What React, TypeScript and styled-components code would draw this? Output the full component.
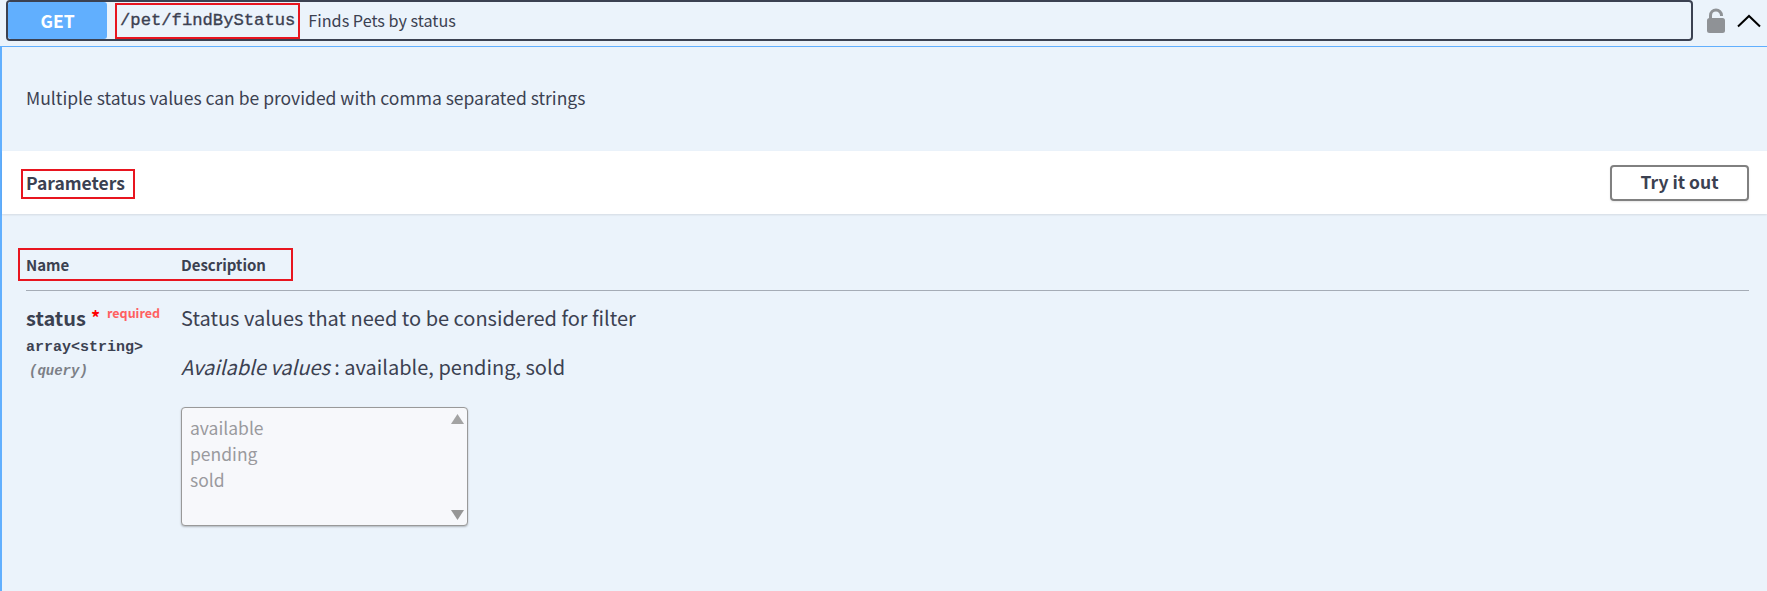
import React from 'react';
import styled, { createGlobalStyle } from 'styled-components';

const SANS = '"Noto Sans CJK SC", "Noto Sans", sans-serif';
const MONO = '"Liberation Mono", "DejaVu Sans Mono", monospace';

const GlobalStyle = createGlobalStyle`
    html, body {
        margin: 0;
        padding: 0;
        background: #ebf3fb;
    }
    * {
        box-sizing: border-box;
    }
`;

const Page = styled.div`
    width: 1767px;
    height: 591px;
    overflow: hidden;
    background: #ebf3fb;
    font-family: ${SANS};
    color: #3b4151;
`;

const SummaryRow = styled.div`
    display: flex;
    align-items: center;
    height: 46px;
    padding: 0 0 5px 6px;
`;

const SummaryBox = styled.div`
    display: flex;
    align-items: center;
    width: 1687px;
    height: 41px;
    margin-top: -1px;
    border: 2px solid #3b4151;
    border-radius: 4px;
`;

const Method = styled.div`
    width: 99px;
    height: 100%;
    display: flex;
    align-items: center;
    justify-content: center;
    background: #61affe;
    border-radius: 3px;
    color: #fff;
    font-size: 17.5px;
    font-weight: 700;
`;

const PathLabel = styled.span`
    display: flex;
    align-items: center;
    height: 36px;
    margin: 1px 0 0 8px;
    padding: 0 3px;
    border: 2px solid #e8151f;
    font-family: ${MONO};
    font-size: 17.2px;
    -webkit-text-stroke: 0.35px #3b4151;
    white-space: nowrap;
`;

const SummaryText = styled.span`
    margin-left: 8px;
    font-size: 16.2px;
`;

const LockIcon = styled.svg`
    margin-left: 13px;
    width: 20px;
    height: 26px;
    flex: none;
`;

const ChevronIcon = styled.svg`
    margin-left: 10px;
    width: 26px;
    height: 16px;
    flex: none;
`;

const Body = styled.div`
    height: 545px;
    border-top: 1px solid #61affe;
    border-left: 2px solid #61affe;
`;

const Description = styled.div`
    height: 100px;
    margin-bottom: 4px;
    padding-left: 24px;
    display: flex;
    align-items: center;
    font-size: 17.5px;
`;

const SectionHeader = styled.div`
    height: 63px;
    display: flex;
    align-items: center;
    justify-content: space-between;
    padding: 0 18px 0 19px;
    background: #fff;
    box-shadow: 0 1px 2px rgba(0, 0, 0, 0.1);
`;

const SectionTitle = styled.h4`
    margin: 3px 0 0;
    padding: 0 8px 3px 3px;
    height: 30px;
    display: flex;
    align-items: center;
    border: 2px solid #e8151f;
    font-size: 17.5px;
    font-weight: 700;
`;

const TryButton = styled.button`
    width: 139px;
    height: 36px;
    padding: 0 0 2px;
    background: #fff;
    border: 2px solid #808080;
    border-radius: 4px;
    box-shadow: 0 1px 2px rgba(0, 0, 0, 0.1);
    color: #3b4151;
    font-family: ${SANS};
    font-size: 17.5px;
    font-weight: 700;
`;

const ParamsWrap = styled.div`
    padding: 33px 18px 0 24px;
`;

const TableHead = styled.div`
    height: 44px;
    border-bottom: 1px solid rgba(59, 65, 81, 0.4);
`;

const HeadBox = styled.div`
    display: inline-flex;
    align-items: center;
    width: 275px;
    height: 33px;
    margin: 1px 0 0 -8px;
    padding-left: 6px;
    border: 2px solid #e8151f;
    font-size: 15px;
    font-weight: 700;
`;

const NameHead = styled.span`
    width: 155px;
`;

const ParamRow = styled.div`
    display: flex;
    padding-top: 13px;
`;

const ParamName = styled.div`
    width: 155px;
    flex: none;
`;

const NameLine = styled.div`
    display: flex;
    align-items: flex-start;
    height: 28px;
    font-size: 20px;
    font-weight: 700;
    line-height: 28px;
`;

const Star = styled.span`
    margin-left: 5px;
    color: #f00;
    font-size: 18px;
    line-height: 26px;
`;

const Required = styled.span`
    margin-left: 7px;
    color: #ff6060;
    font-size: 12.5px;
    line-height: 18px;
`;

const ParamType = styled.div`
    margin-top: 7px;
    font-family: ${MONO};
    font-size: 15px;
    font-weight: 700;
    line-height: 18px;
`;

const ParamIn = styled.div`
    margin-top: 6px;
    padding-left: 3px;
    font-family: ${MONO};
    font-size: 14px;
    font-style: italic;
    font-weight: 700;
    line-height: 16px;
    color: #7c7f87;
`;

const ParamDetail = styled.div`
    font-size: 20px;
    line-height: 28px;
`;

const DetailLine = styled.p`
    margin: 0 0 21px;
`;

const ListBox = styled.div`
    position: relative;
    width: 287px;
    height: 119px;
    margin-top: 26px;
    padding: 7px 8px;
    background: #f7f8fb;
    border: 1px solid #999;
    border-radius: 4px;
    box-shadow: 0 1px 2px rgba(0, 0, 0, 0.25);
    color: #9a9a9e;
    font-size: 17.5px;
    line-height: 26px;
`;

const ScrollArrow = styled.svg<{ $down?: boolean }>`
    position: absolute;
    right: 3px;
    width: 13px;
    height: 10px;
    fill: ${(p) => (p.$down ? '#969696' : '#a3a3a3')};
    ${(p) => (p.$down ? 'bottom: 5px;' : 'top: 6px;')}
`;

const App = () => (
    <Page>
        <GlobalStyle />
        <SummaryRow>
            <SummaryBox>
                <Method>GET</Method>
                <PathLabel>/pet/findByStatus</PathLabel>
                <SummaryText>Finds Pets by status</SummaryText>
            </SummaryBox>
            <LockIcon viewBox="0 0 20 26">
                <path
                    d="M4.5 11V7.5a5.5 5.5 0 0 1 11 0V8"
                    fill="none"
                    stroke="#8f9296"
                    strokeWidth="3"
                />
                <rect x="1" y="10" width="18" height="15" rx="2.5" fill="#8f9296" />
            </LockIcon>
            <ChevronIcon viewBox="0 0 26 16">
                <path d="M2 13.5 13 3l11 10.5" fill="none" stroke="#000" strokeWidth="2" />
            </ChevronIcon>
        </SummaryRow>
        <Body>
            <Description>Multiple status values can be provided with comma separated strings</Description>
            <SectionHeader>
                <SectionTitle>Parameters</SectionTitle>
                <TryButton>Try it out</TryButton>
            </SectionHeader>
            <ParamsWrap>
                <TableHead>
                    <HeadBox>
                        <NameHead>Name</NameHead>
                        <span>Description</span>
                    </HeadBox>
                </TableHead>
                <ParamRow>
                    <ParamName>
                        <NameLine>
                            status
                            <Star>*</Star>
                            <Required>required</Required>
                        </NameLine>
                        <ParamType>array&lt;string&gt;</ParamType>
                        <ParamIn>(query)</ParamIn>
                    </ParamName>
                    <ParamDetail>
                        <DetailLine>Status values that need to be considered for filter</DetailLine>
                        <DetailLine>
                            <em>Available values</em> : available, pending, sold
                        </DetailLine>
                        <ListBox>
                            <div>available</div>
                            <div>pending</div>
                            <div>sold</div>
                            <ScrollArrow viewBox="0 0 13 10">
                                <path d="M6.5 0 13 10H0z" />
                            </ScrollArrow>
                            <ScrollArrow $down viewBox="0 0 13 10">
                                <path d="M0 0h13L6.5 10z" />
                            </ScrollArrow>
                        </ListBox>
                    </ParamDetail>
                </ParamRow>
            </ParamsWrap>
        </Body>
    </Page>
);

export default App;
